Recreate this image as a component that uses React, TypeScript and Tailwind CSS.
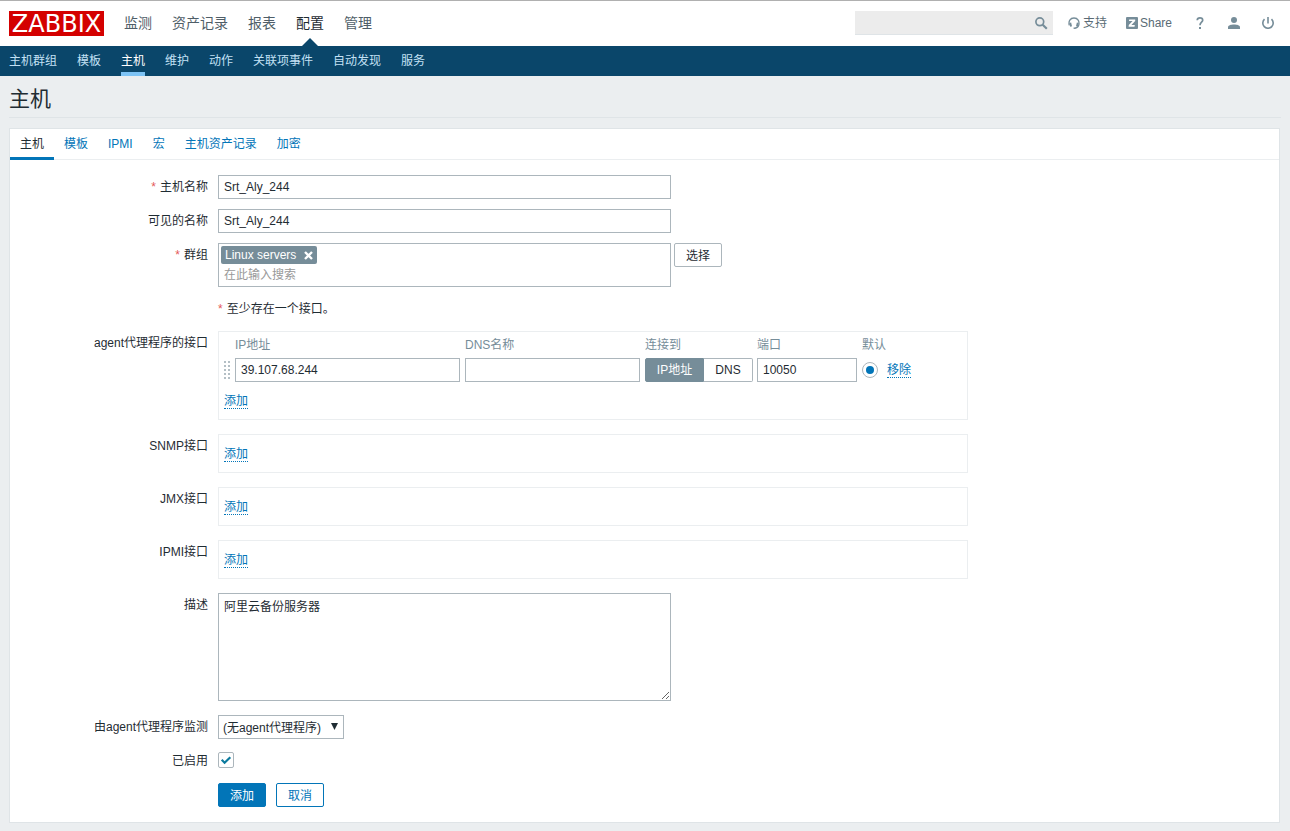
import { useState } from 'react';
import type { ReactNode } from 'react';

const mainMenu = ['监测', '资产记录', '报表', '配置', '管理'];
const subMenu = ['主机群组', '模板', '主机', '维护', '动作', '关联项事件', '自动发现', '服务'];
const tabs = ['主机', '模板', 'IPMI', '宏', '主机资产记录', '加密'];

const field =
  'h-6 border border-[#acb6bc] bg-white px-[5px] text-xs text-[#1f2c33] outline-none focus:border-[#0275b8]';

function SearchIcon() {
  return (
    <svg className="block size-[14px]" viewBox="0 0 14 14" fill="none" stroke="#768d99">
      <circle cx="5.8" cy="5.8" r="3.9" strokeWidth="1.7" />
      <path d="M8.7 8.7 12.8 12.8" strokeWidth="2.2" />
    </svg>
  );
}

function HeadsetIcon() {
  return (
    <svg className="size-3" viewBox="0 0 12 12" fill="none" stroke="#768d99">
      <path d="M1.300 8.400C.2 4.200 2.200 1 6 1s5.800 3.200 4.700 7.400C10.200 10.200 8.900 11 7 11.200" strokeWidth="1.300" />
      <path d="M2.200 5.800l.9 3.600M9.800 5.800l-.9 3.600" strokeWidth="1.900" />
      <path d="M5.600 11.200h2" strokeWidth="1.500" />
    </svg>
  );
}

function ShareIcon() {
  return (
    <svg className="size-3" viewBox="0 0 12 12">
      <rect width="12" height="12" rx="1" fill="#768d99" />
      <path d="M3.200 2.400h6v1.500L5.400 8h3.400l-.3 1.700H2.600l.2-1.600 3.800-4H3z" fill="#fff" />
    </svg>
  );
}

function HelpIcon() {
  return (
    <svg className="h-3 w-2" viewBox="0 0 8 12" fill="none" stroke="#768d99" strokeWidth="1.700">
      <path d="M1.200 3.200C1.300 1.600 2.400.9 3.900.9c1.600 0 2.800.9 2.800 2.300C6.700 5.200 4 5.300 4 8.300" />
      <path d="M4 9.900v2" strokeWidth="2" />
    </svg>
  );
}

function UserIcon() {
  return (
    <svg className="size-3" viewBox="0 0 12 12" fill="#768d99">
      <circle cx="6" cy="3" r="3" />
      <path d="M0 12V10.200C0 8.200 3 7.400 6 7.400s6 .8 6 2.800V12z" />
    </svg>
  );
}

function PowerIcon() {
  return (
    <svg className="size-3" viewBox="0 0 12 12" fill="none" stroke="#768d99" strokeWidth="1.600">
      <path d="M2.500 2.200a5.200 5.200 0 1 0 7 0M6 0v6.500" />
    </svg>
  );
}

function DragHandle() {
  return (
    <svg className="block h-[18px] w-1.5" viewBox="0 0 6 18" fill="#b4bfc5">
      {[0, 4, 8, 12, 16].map((y) => (
        <g key={y}>
          <rect x="0" y={y} width="2" height="2" />
          <rect x="4" y={y} width="2" height="2" />
        </g>
      ))}
    </svg>
  );
}

function Row({
  label,
  htmlFor,
  required,
  last,
  children,
}: {
  label?: string;
  htmlFor?: string;
  required?: boolean;
  last?: boolean;
  children: ReactNode;
}) {
  return (
    <div className={last ? 'flex pb-[14px]' : 'flex pb-2.5'}>
      <div className="w-[198px] shrink-0 text-right leading-6">
        {label && (
          <label htmlFor={htmlFor}>
            {required && <span className="mr-1 text-[#e45959]">*</span>}
            {label}
          </label>
        )}
      </div>
      <div className="ml-2.5 min-w-0 grow">{children}</div>
    </div>
  );
}

function DottedLink({ children }: { children: ReactNode }) {
  return (
    <button
      type="button"
      className="block cursor-pointer border-b border-dotted border-[#0275b8] leading-[14px] text-[#0275b8]"
    >
      {children}
    </button>
  );
}

function InterfaceRow({ label }: { label: string }) {
  return (
    <Row label={label} last>
      <div className="max-w-[750px] border border-[#ebeef0] px-[5px] pt-3 pb-2.5">
        <DottedLink>添加</DottedLink>
      </div>
    </Row>
  );
}

export default function App() {
  const [enabled, setEnabled] = useState(true);
  const [connect, setConnect] = useState('ip');

  return (
    <div className="min-h-screen bg-[#ebeef0] pb-2 font-['Liberation_Sans','Noto_Sans_CJK_SC',sans-serif] text-xs text-[#1f2c33]">
      <header className="flex h-[46px] items-start border-t border-[#b0b0b0] bg-white pt-2.5 pr-4 pl-[9px]">
        <a
          href="#"
          className="flex h-[25px] w-[95px] items-center justify-center bg-[#d40000] font-['DejaVu_Sans',sans-serif] text-2xl leading-none text-white"
        >
          ZABBIX
        </a>
        <nav className="ml-5 flex h-[35px] gap-5 text-sm leading-6">
          {mainMenu.map((item) => (
            <a
              key={item}
              href="#"
              className={item === '配置' ? 'relative text-[#1f2c33]' : 'text-[#4f5e68]'}
            >
              {item}
              {item === '配置' && (
                <svg
                  className="absolute bottom-0 left-1/2 h-2 w-4 -translate-x-1/2"
                  viewBox="0 0 16 8"
                  fill="#0a466a"
                >
                  <path d="M0 8 8 0l8 8z" />
                </svg>
              )}
            </a>
          ))}
        </nav>
        <div className="ml-auto flex h-6 items-center text-[#5a6b75]">
          <form className="flex h-6 w-[198px] items-center border-b border-[#dfe4e7] bg-[#ececec] pr-[5px]">
            <input
              type="search"
              aria-label="搜索"
              className="h-full min-w-0 grow bg-transparent px-[5px] outline-none"
            />
            <button type="button" aria-label="搜索">
              <SearchIcon />
            </button>
          </form>
          <a href="#" className="ml-[15px] flex items-center gap-[3px]">
            <HeadsetIcon />
            支持
          </a>
          <a href="#" className="ml-[19px] flex items-center gap-0.5">
            <ShareIcon />
            Share
          </a>
          <a href="#" aria-label="帮助" className="ml-6">
            <HelpIcon />
          </a>
          <a href="#" aria-label="用户" className="ml-6">
            <UserIcon />
          </a>
          <a href="#" aria-label="退出" className="ml-[22px]">
            <PowerIcon />
          </a>
        </div>
      </header>

      <nav className="flex h-[30px] gap-5 bg-[#0a466a] px-[9px]">
        {subMenu.map((item) => (
          <a
            key={item}
            href="#"
            className={
              item === '主机'
                ? 'border-b-4 border-[#7dc3f5] leading-[30px] text-white'
                : 'leading-[30px] text-[#c3e1f5]'
            }
          >
            {item}
          </a>
        ))}
      </nav>

      <main className="px-[9px]">
        <h1 className="mb-2.5 h-[42px] border-b border-[#dfe4e7] text-[21px] leading-[46px]">主机</h1>

        <div className="mr-px border border-[#dfe4e7] bg-white">
          <div role="tablist" className="flex border-b border-[#ebeef0]">
            {tabs.map((tab) => (
              <button
                key={tab}
                type="button"
                role="tab"
                aria-selected={tab === '主机'}
                className={
                  tab === '主机'
                    ? '-mb-px h-[31px] border-b-3 border-[#0275b8] px-2.5 pt-0.5 text-[#1f2c33]'
                    : 'h-[30px] px-2.5 leading-[30px] text-[#0275b8]'
                }
              >
                {tab}
              </button>
            ))}
          </div>

          <form className="pt-[15px] pb-[15px]">
            <Row label="主机名称" htmlFor="host" required>
              <input id="host" defaultValue="Srt_Aly_244" className={`${field} block w-full max-w-[453px]`} />
            </Row>
            <Row label="可见的名称" htmlFor="visible-name">
              <input
                id="visible-name"
                defaultValue="Srt_Aly_244"
                className={`${field} block w-full max-w-[453px]`}
              />
            </Row>
            <Row label="群组" htmlFor="groups" required>
              <div className="flex items-start gap-[3px]">
                <div className="h-11 w-full max-w-[453px] border border-[#acb6bc] p-0.5">
                  <span className="flex h-[18px] w-24 items-center justify-between rounded-xs bg-[#768d99] px-1 text-white">
                    Linux servers
                    <button type="button" aria-label="移除 Linux servers">
                      <svg className="size-[9px]" viewBox="0 0 9 9" stroke="#fff" strokeWidth="2.400">
                        <path d="M1 1l7 7M8 1L1 8" />
                      </svg>
                    </button>
                  </span>
                  <input
                    id="groups"
                    placeholder="在此输入搜索"
                    className="block h-5 w-full bg-transparent px-[3px] pt-0.5 outline-none placeholder:text-[#999999]"
                  />
                </div>
                <button
                  type="button"
                  className="h-6 w-12 shrink-0 rounded-xs border border-[#acb6bc] bg-white pt-0.5"
                >
                  选择
                </button>
              </div>
            </Row>
            <Row>
              <p className="leading-6">
                <span className="mr-1 text-[#e45959]">*</span>
                至少存在一个接口。
              </p>
            </Row>
            <Row label="agent代理程序的接口" last>
              <div className="max-w-[750px] border border-[#ebeef0] px-[5px] pb-2.5">
                <table className="border-collapse text-left">
                  <thead className="text-[#768d99]">
                    <tr className="h-[26px]">
                      <th className="w-[11px] p-0" />
                      <th className="p-0 font-normal">IP地址</th>
                      <th className="p-0 font-normal">DNS名称</th>
                      <th className="p-0 font-normal">连接到</th>
                      <th className="p-0 font-normal">端口</th>
                      <th className="p-0 font-normal">默认</th>
                      <th className="p-0" />
                    </tr>
                  </thead>
                  <tbody>
                    <tr>
                      <td className="p-0">
                        <DragHandle />
                      </td>
                      <td className="p-0 pr-[5px]">
                        <input aria-label="IP地址" defaultValue="39.107.68.244" className={`${field} block w-[225px]`} />
                      </td>
                      <td className="p-0 pr-[5px]">
                        <input aria-label="DNS名称" className={`${field} block w-[175px]`} />
                      </td>
                      <td className="p-0 pr-1">
                        <div className="flex w-[108px]">
                          <button
                            type="button"
                            onClick={() => setConnect('ip')}
                            className={
                              connect === 'ip'
                                ? 'h-6 w-[59px] rounded-l-xs border border-[#768d99] bg-[#768d99] text-white'
                                : 'h-6 w-[59px] rounded-l-xs border border-[#acb6bc] bg-white'
                            }
                          >
                            IP地址
                          </button>
                          <button
                            type="button"
                            onClick={() => setConnect('dns')}
                            className={
                              connect === 'dns'
                                ? 'h-6 w-[49px] rounded-r-xs border border-[#768d99] bg-[#768d99] text-white'
                                : 'h-6 w-[49px] rounded-r-xs border border-l-0 border-[#acb6bc] bg-white'
                            }
                          >
                            DNS
                          </button>
                        </div>
                      </td>
                      <td className="p-0 pr-[5px]">
                        <input aria-label="端口" defaultValue="10050" className={`${field} block w-[100px]`} />
                      </td>
                      <td className="p-0 pr-[9px]">
                        <input
                          type="radio"
                          aria-label="默认"
                          defaultChecked
                          className="grid size-4 appearance-none place-items-center rounded-full border border-[#acb6bc] bg-white before:size-2 before:rounded-full checked:before:bg-[#0275b8]"
                        />
                      </td>
                      <td className="p-0">
                        <DottedLink>移除</DottedLink>
                      </td>
                    </tr>
                  </tbody>
                </table>
                <div className="mt-3">
                  <DottedLink>添加</DottedLink>
                </div>
              </div>
            </Row>
            <InterfaceRow label="SNMP接口" />
            <InterfaceRow label="JMX接口" />
            <InterfaceRow label="IPMI接口" />
            <Row label="描述" htmlFor="description" last>
              <textarea
                id="description"
                defaultValue="阿里云备份服务器"
                className="block h-[108px] w-full max-w-[453px] resize border border-[#acb6bc] px-[5px] py-[5px] outline-none"
              />
            </Row>
            <Row label="由agent代理程序监测" htmlFor="proxy">
              <div className="relative w-[126px]">
                <select
                  id="proxy"
                  className="block h-6 w-full appearance-none border border-[#acb6bc] bg-white pt-0.5 pr-5 pl-1 outline-none"
                >
                  <option>(无agent代理程序)</option>
                </select>
                <svg
                  className="pointer-events-none absolute top-2 right-1.5 h-[7px] w-[7px]"
                  viewBox="0 0 7 7"
                  fill="#1f2c33"
                >
                  <path d="M0 0h7L3.500 7z" />
                </svg>
              </div>
            </Row>
            <Row label="已启用" htmlFor="enabled">
              <div className="flex h-[22px] items-center">
                <div className="relative size-4">
                  <input
                    id="enabled"
                    type="checkbox"
                    checked={enabled}
                    onChange={(e) => setEnabled(e.target.checked)}
                    className="block size-4 appearance-none rounded-xs border border-[#acb6bc] bg-white"
                  />
                  {enabled && (
                    <svg
                      className="pointer-events-none absolute inset-0 size-4"
                      viewBox="0 0 16 16"
                      fill="none"
                      stroke="#0b7a9e"
                      strokeWidth="2.200"
                    >
                      <path d="M3.700 7.800l2.900 2.900 5.700-5.400" />
                    </svg>
                  )}
                </div>
              </div>
            </Row>
            <div className="ml-52 flex gap-2.5">
              <button
                type="button"
                className="h-6 w-12 rounded-xs border border-[#0275b8] bg-[#0275b8] pt-0.5 text-white"
              >
                添加
              </button>
              <button
                type="button"
                className="h-6 w-12 rounded-xs border border-[#0275b8] bg-white pt-0.5 text-[#0275b8]"
              >
                取消
              </button>
            </div>
          </form>
        </div>
      </main>
    </div>
  );
}
